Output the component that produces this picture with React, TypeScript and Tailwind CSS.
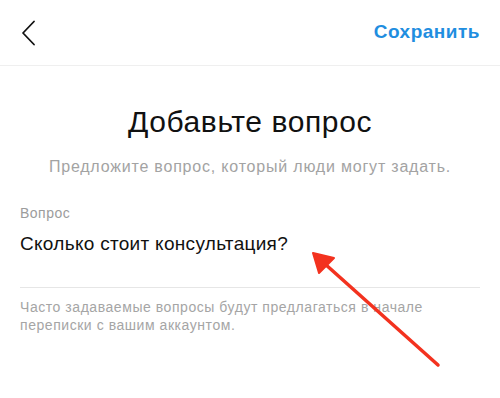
export default function App() {
  return (
    <div className="relative h-[398px] w-[500px] overflow-hidden bg-white font-['Liberation_Sans',sans-serif]">
      <header className="flex h-[66px] items-center justify-between border-b border-[#efefef] pl-[20px] pr-[20px]">
        <svg width="16" height="26" viewBox="0 0 16 26" className="ml-[1px]">
          <path d="M13 1.5 L2 13 L13 24.5" fill="none" stroke="#111" strokeWidth="1.8" strokeLinecap="round" strokeLinejoin="round" />
        </svg>
        <button className="text-[19px] font-semibold tracking-[0.5px] text-[#1f8ee0]">Сохранить</button>
      </header>

      <section className="flex flex-col items-center pt-[39px]">
        <h1 className="text-[30px] leading-[34px] tracking-[0.6px] text-[#111]">Добавьте вопрос</h1>
        <p className="mt-[16px] text-[16px] tracking-[0.8px] text-[#a3a3a3]">Предложите вопрос, который люди могут задать.</p>
      </section>

      <section className="px-[20px] pt-[24px]">
        <p className="text-[14px] tracking-[0.5px] text-[#9c9c9c]">Вопрос</p>
        <p className="mt-[6px] text-[19px] tracking-[0.3px] text-[#111]">Сколько стоит консультация?</p>
        <div className="mt-[28px] border-b border-[#e6e6e6]" />
        <p className="mt-[10px] text-[14px] leading-[18px] tracking-[0.55px] text-[#a5a5a5]">
          Часто задаваемые вопросы будут предлагаться в начале
          <br />
          переписки с вашим аккаунтом.
        </p>
      </section>

      <svg className="pointer-events-none absolute left-0 top-0" width="500" height="398">
        <line x1="438" y1="365" x2="325" y2="264" stroke="#f3321f" strokeWidth="3.5" strokeLinecap="round" />
        <polygon points="313,253 334,258 319,273" fill="#f3321f" stroke="#f3321f" strokeWidth="2" strokeLinejoin="round" />
      </svg>
    </div>
  );
}
